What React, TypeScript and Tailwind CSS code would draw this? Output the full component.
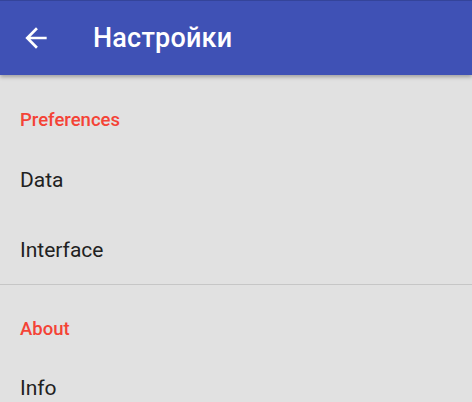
function Category({ title, first }: { title: string; first?: boolean }) {
  return (
    <div className={first ? "mt-[20px] h-[49px] pt-[3px] flex items-center px-[20px]" : "mt-[20px] h-[47px] pt-[3px] flex items-center px-[20px]"}>
      <span className="text-[18.5px] font-medium text-[#F44336]">{title}</span>
    </div>
  );
}

function Item({ title }: { title: string }) {
  return (
    <div className="h-[70px] pt-[3px] flex items-center px-[20px]">
      <span className="text-[21px] text-[#212121]">{title}</span>
    </div>
  );
}

export default function App() {
  return (
    <div className="w-[472px] h-[402px] overflow-hidden bg-[#E1E1E1] font-['Roboto',sans-serif]">
      <header className="relative z-10 h-[75px] flex items-center bg-[#3F51B5] border-t border-[#34449A] shadow-[0_2px_4px_rgba(0,0,0,0.3)]">
        <div className="w-[93px] flex justify-start pl-[20px]">
          <svg width="32" height="32" viewBox="0 0 24 24" fill="#ffffff">
            <path d="M20 11H7.83l5.59-5.59L12 4l-8 8 8 8 1.41-1.41L7.83 13H20v-2z" />
          </svg>
        </div>
        <h1 className="text-[27px] font-medium text-white tracking-[0.2px]">Настройки</h1>
      </header>
      <Category title="Preferences" first />
      <Item title="Data" />
      <Item title="Interface" />
      <div className="h-px bg-[#C6C6C6]" />
      <Category title="About" />
      <Item title="Info" />
    </div>
  );
}
